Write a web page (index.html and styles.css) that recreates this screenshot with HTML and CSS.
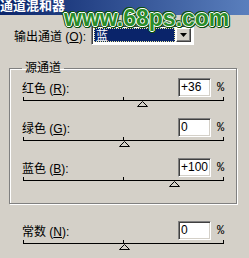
FILE: index.html
```html
<!DOCTYPE html>
<html lang="zh-CN">

<head>
    <meta charset="UTF-8">
    <title>通道混和器</title>
    <link rel="stylesheet" href="styles.css">
</head>

<body>

    <!-- Title bar -->
    <div class="titlebar"><span class="title">通道混和器</span></div>
    <div class="watermark">www.68ps.com</div>

    <div class="output-row">
        <span class="label">输出通道 (<u>O</u>):</span>
        <div class="combo">
            <span class="combo-value">蓝</span>
            <span class="combo-btn">
                <svg width="7" height="4" viewBox="0 0 7 4"><polygon points="0,0 7,0 3.5,4" fill="#000"/></svg>
            </span>
        </div>
    </div>

    <fieldset class="source">
        <legend>源通道</legend>

        <div class="channel">
            <div class="row">
                <span class="label">红色 (<u>R</u>):</span>
                <span class="num">+36</span>
                <span class="pct">%</span>
            </div>
            <div class="slider">
                <span class="thumb" style="left: 59%"><svg width="11" height="6" viewBox="0 0 11 6"><polygon points="5.5,0.5 0.5,5.5 10.5,5.5" fill="none" stroke="#000"/></svg></span>
            </div>
        </div>

        <div class="channel">
            <div class="row">
                <span class="label">绿色 (<u>G</u>):</span>
                <span class="num">0</span>
                <span class="pct">%</span>
            </div>
            <div class="slider">
                <span class="thumb" style="left: 50%"><svg width="11" height="6" viewBox="0 0 11 6"><polygon points="5.5,0.5 0.5,5.5 10.5,5.5" fill="none" stroke="#000"/></svg></span>
            </div>
        </div>

        <div class="channel">
            <div class="row">
                <span class="label">蓝色 (<u>B</u>):</span>
                <span class="num">+100</span>
                <span class="pct">%</span>
            </div>
            <div class="slider">
                <span class="thumb" style="left: 75%"><svg width="11" height="6" viewBox="0 0 11 6"><polygon points="5.5,0.5 0.5,5.5 10.5,5.5" fill="none" stroke="#000"/></svg></span>
            </div>
        </div>
    </fieldset>

    <div class="constant">
        <div class="row">
            <span class="label">常数 (<u>N</u>):</span>
            <span class="num">0</span>
            <span class="pct">%</span>
        </div>
        <div class="slider">
            <span class="thumb" style="left: 50%"><svg width="11" height="6" viewBox="0 0 11 6"><polygon points="5.5,0.5 0.5,5.5 10.5,5.5" fill="none" stroke="#000"/></svg></span>
        </div>
    </div>

</body>

</html>
```

FILE: styles.css
```css
body {
    margin: 0;
    width: 249px;
    height: 258px;
    overflow: hidden;
    position: relative;
    background: #d4d0c8;
    font-family: "Liberation Sans", "Noto Sans CJK SC", sans-serif;
    font-size: 12px;
    color: #000;
}

u {
    text-decoration: underline;
}

/* Title bar */
.titlebar {
    height: 15px;
    overflow: hidden;
    background: linear-gradient(to right, #0a246a, #5a7fbd);
}

.title {
    display: block;
    margin-top: -3px;
    font-family: "Noto Sans CJK SC", sans-serif;
    font-size: 13px;
    line-height: 15px;
    font-weight: bold;
    color: #fff;
}

.watermark {
    position: absolute;
    left: 64px;
    top: 5px;
    font-family: "Liberation Sans", sans-serif;
    font-size: 23px;
    line-height: 26px;
    font-weight: bold;
    color: #2a8d2a;
    text-shadow:
        1px 0 #fff, -1px 0 #fff, 0 1px #fff, 0 -1px #fff,
        2px 0 #0d4f0d, -2px 0 #0d4f0d, 0 2px #0d4f0d, 0 -2px #0d4f0d,
        1px 1px #0d4f0d, -1px -1px #0d4f0d, 1px -1px #0d4f0d, -1px 1px #0d4f0d,
        2px 1px #0d4f0d, -2px -1px #0d4f0d, 1px 2px #0d4f0d, -1px -2px #0d4f0d;
}

/* Output channel */
.output-row {
    display: flex;
    align-items: center;
    margin-top: 10px;
    padding-left: 14px;
}

.output-row .label {
    width: 77px;
}

.combo {
    display: flex;
    width: 103px;
    height: 20px;
    box-sizing: border-box;
    padding: 2px;
    border: 1px solid;
    border-color: #808080 #fff #fff #808080;
    box-shadow: inset 1px 1px #404040;
    background: #fff;
}

.combo-value {
    flex: 1;
    margin-right: 1px;
    padding-left: 2px;
    background: #0a246a;
    color: #fff;
    font-family: "Noto Sans CJK SC", sans-serif;
    line-height: 14px;
    outline: 1px dotted #e8e6a0;
    outline-offset: -1px;
}

.combo-btn {
    display: flex;
    align-items: center;
    justify-content: center;
    width: 15px;
    box-sizing: border-box;
    background: #d4d0c8;
    border: 1px solid;
    border-color: #fff #404040 #404040 #fff;
    box-shadow: inset -1px -1px #808080;
}

/* Source channels */
.source {
    width: 228px;
    box-sizing: border-box;
    margin: 16px 0 0 9px;
    padding: 3px 12px 5px 12px;
    border: 1px solid #808080;
    box-shadow: inset 1px 1px #fff, 1px 1px #fff;
}

.source legend {
    padding: 0 3px;
    line-height: 14px;
}

.row {
    display: flex;
    align-items: center;
    height: 19px;
}

.row .label {
    flex: 1;
}

.num {
    width: 33px;
    height: 19px;
    box-sizing: border-box;
    padding: 1px 0 0 2px;
    border: 1px solid;
    border-color: #808080 #fff #fff #808080;
    box-shadow: inset 1px 1px #404040, inset -1px -1px #d4d0c8;
    background: #fff;
    line-height: 15px;
}

.pct {
    margin-left: 6px;
    width: 7px;
    font-family: "Liberation Mono", monospace;
}

.slider {
    position: relative;
    width: 201px;
    height: 21px;
    margin-left: 1px;
}

.slider::before {
    content: "";
    position: absolute;
    top: 0;
    left: 0;
    right: 0;
    height: 3px;
    border: 1px solid #000;
    border-top: 0;
}

.slider::after {
    content: "";
    position: absolute;
    top: 0;
    left: 100px;
    width: 1px;
    height: 3px;
    background: #000;
}

.thumb {
    position: absolute;
    top: 4px;
    margin-left: -5px;
    line-height: 0;
}

/* Constant */
.constant {
    margin-top: 17px;
    padding-left: 22px;
    width: 202px;
}
```
